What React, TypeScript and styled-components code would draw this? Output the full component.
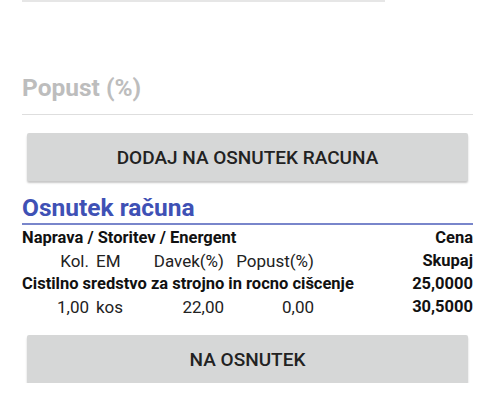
import { FC } from "react";
import styled, { createGlobalStyle } from "styled-components";

const GlobalStyle = createGlobalStyle`
	body {
		margin: 0;
		background: #fff;
		font-family: Roboto, "Liberation Sans", sans-serif;
		color: #111;
	}
`;

const Page = styled("div")`
	padding: 0 22px;
	width: 451px;
`;

const PrevFieldLine = styled("div")`
	width: 363px;
	height: 2px;
	background: #e6e6e6;
`;

const Field = styled("div")`
	padding-top: 71px;
	border-bottom: 1.5px solid #dedede;
	padding-bottom: 11px;
`;

const Hint = styled("div")`
	font-size: 24.5px;
	line-height: 30px;
	font-weight: 700;
	color: #bdbdbd;
`;

const ActionButton = styled("button")<{ $top: number }>`
	display: block;
	width: 441px;
	height: 48px;
	margin: ${(p) => p.$top}px 5px 0;
	background: #d6d7d7;
	border: none;
	border-radius: 2px;
	box-shadow: 0 2px 2px rgba(0, 0, 0, 0.22);
	font-family: Roboto, "Liberation Sans", sans-serif;
	font-size: 19px;
	font-weight: 500;
	color: #222;
	cursor: pointer;
`;

const Title = styled("div")`
	margin-top: 13px;
	font-size: 24.5px;
	line-height: 27px;
	font-weight: 700;
	color: #3f51b5;
	border-bottom: 2px solid #7986cb;
	padding-bottom: 2px;
`;

const Table = styled("div")`
	padding-top: 1px;
`;

const Row = styled("div")`
	display: flex;
	justify-content: space-between;
	height: 23px;
	align-items: center;
	font-size: 16.5px;
	font-weight: 700;
`;

const DetailRow = styled("div")`
	display: grid;
	grid-template-columns: 67px 57px 78px 90px 1fr;
	height: 23px;
	align-items: center;
	font-size: 17px;
	color: #222;
`;

const Cell = styled("span")<{ $align?: "left" | "right"; $bold?: boolean }>`
	text-align: ${(p) => p.$align ?? "right"};
	font-weight: ${(p) => (p.$bold ? 700 : 400)};
	font-size: ${(p) => (p.$bold ? "16.5px" : "17px")};
	padding-left: ${(p) => (p.$align === "left" ? "7px" : "0")};
	color: ${(p) => (p.$bold ? "#111" : "#222")};
	white-space: nowrap;
`;

const App: FC = () => {
	return (
		<Page>
			<GlobalStyle />
			<PrevFieldLine />
			<Field>
				<Hint>Popust (%)</Hint>
			</Field>
			<ActionButton $top={18}>DODAJ NA OSNUTEK RACUNA</ActionButton>
			<Title>Osnutek računa</Title>
			<Table>
				<Row>
					<span>Naprava / Storitev / Energent</span>
					<span>Cena</span>
				</Row>
				<DetailRow>
					<Cell>Kol.</Cell>
					<Cell $align="left">EM</Cell>
					<Cell>Davek(%)</Cell>
					<Cell>Popust(%)</Cell>
					<Cell $bold>Skupaj</Cell>
				</DetailRow>
				<Row>
					<span>Cistilno sredstvo za strojno in rocno cišcenje</span>
					<span>25,0000</span>
				</Row>
				<DetailRow>
					<Cell>1,00</Cell>
					<Cell $align="left">kos</Cell>
					<Cell>22,00</Cell>
					<Cell>0,00</Cell>
					<Cell $bold>30,5000</Cell>
				</DetailRow>
			</Table>
			<ActionButton $top={17}>NA OSNUTEK</ActionButton>
		</Page>
	);
};

export default App;
